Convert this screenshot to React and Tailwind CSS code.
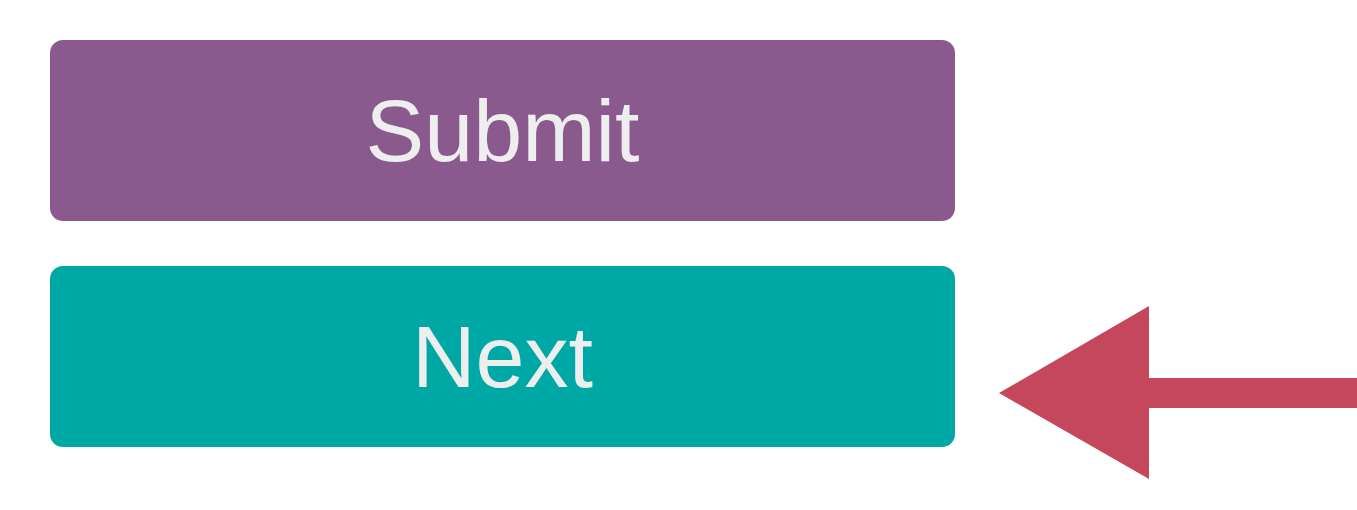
import React from 'react';

function Arrow() {
    return (
        <svg width="358" height="173" viewBox="0 0 358 173" className="block shrink-0">
            <polygon points="0,87 150,0 150,72 358,72 358,102 150,102 150,173" fill="#c5475c" />
        </svg>
    );
}

export default function App() {
    const btn = 'w-[905px] h-[181px] rounded-[13px] flex items-center justify-center text-[88px] leading-none text-[#eeeeee] shrink-0';

    return (
        <div className="w-[1357px] h-[510px] bg-white overflow-hidden pl-[50px] pt-[40px] flex flex-col gap-[45px]" style={{ fontFamily: '"Liberation Sans", Arial, sans-serif' }}>
            <button className={`${btn} bg-[#8a5a8e]`}>Submit</button>
            <div className="flex items-start gap-[44px]">
                <button className={`${btn} bg-[#00a8a5]`}>Next</button>
                <div className="mt-[40px]">
                    <Arrow />
                </div>
            </div>
        </div>
    );
}
